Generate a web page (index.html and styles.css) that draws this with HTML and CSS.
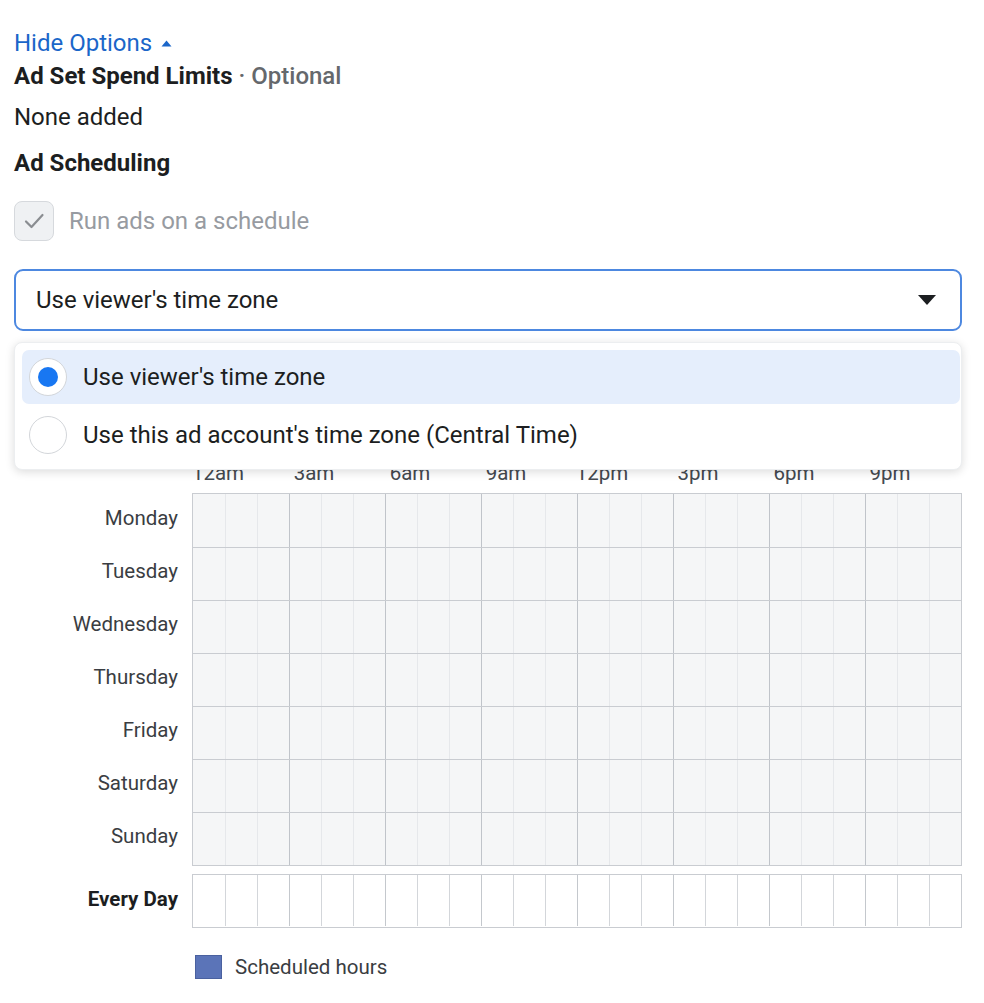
FILE: index.html
```html
<!DOCTYPE html>
<html>
<head>
<meta charset="utf-8">
<link rel="stylesheet" href="styles.css">
<script type="text/javascript">

var days = ['Monday', 'Tuesday', 'Wednesday', 'Thursday', 'Friday', 'Saturday', 'Sunday'];

function fillRow(row) {
    for (var hour = 0; hour < 24; hour++) {
        var cell = document.createElement('div');
        cell.className = 'cell';
        if (hour > 0 && hour % 3 == 0) {
            cell.className += ' group-start';
        }
        row.appendChild(cell);
    }
}

function uiSetup() {
    var names = document.querySelector('div.day-names');
    var grid = document.querySelector('div.week-grid');
    for (var day of days) {
        var label = document.createElement('div');
        label.className = 'day-name';
        label.textContent = day;
        names.appendChild(label);

        var row = document.createElement('div');
        row.className = 'row';
        fillRow(row);
        grid.appendChild(row);
    }
    fillRow(document.querySelector('div.every-day-grid .row'));
}

document.addEventListener('DOMContentLoaded', uiSetup);

</script>
</head>
<body>

<div class="page">

<a class="toggle">Hide Options <svg width="11" height="7" viewBox="0 0 11 7"><path d="M5.5 0.5 L10.5 6.5 L0.5 6.5 Z" fill="#1b66c9"/></svg></a>

<div class="section-title">Ad Set Spend Limits <span class="optional">· Optional</span></div>
<div class="value">None added</div>

<div class="section-title scheduling">Ad Scheduling</div>

<label class="check-row">
    <span class="checkbox"><svg width="24" height="24" viewBox="0 0 24 24"><path d="M4 12.5 L9.5 18 L20.5 6" fill="none" stroke="#8a8d91" stroke-width="2.2" stroke-linecap="round" stroke-linejoin="round"/></svg></span>
    <span class="check-label">Run ads on a schedule</span>
</label>

<div class="picker">
    <div class="select">
        <span>Use viewer's time zone</span>
        <svg width="18" height="10" viewBox="0 0 18 10"><path d="M0 0 L18 0 L9 10 Z" fill="#1c1e21"/></svg>
    </div>
    <div class="menu">
        <div class="option selected"><span class="radio"></span>Use viewer's time zone</div>
        <div class="option"><span class="radio"></span>Use this ad account's time zone (Central Time)</div>
    </div>
</div>

<div class="schedule">
    <div class="hours">
        <span>12am</span><span>3am</span><span>6am</span><span>9am</span>
        <span>12pm</span><span>3pm</span><span>6pm</span><span>9pm</span>
    </div>
    <div class="week">
        <div class="day-names"></div>
        <div class="week-grid"></div>
    </div>
    <div class="week every-day">
        <div class="day-names"><div class="day-name">Every Day</div></div>
        <div class="every-day-grid"><div class="row"></div></div>
    </div>
    <div class="legend">
        <span class="swatch"></span>
        <span>Scheduled hours</span>
    </div>
</div>

</div>

</body>
</html>
```

FILE: styles.css
```css
body {
    margin: 0;
    font-family: Roboto, "Liberation Sans", sans-serif;
    color: #1c1e21;
    background: #fff;
}

.page {
    width: 948px;
    padding: 29px 14px 0 14px;
}

.toggle {
    display: flex;
    align-items: center;
    gap: 9px;
    font-size: 24px;
    line-height: 28px;
    color: #1b66c9;
}

.section-title {
    margin-top: 5px;
    font-size: 24px;
    line-height: 28px;
    font-weight: 700;
}

.section-title .optional {
    color: #65686c;
    font-weight: 500;
}

.section-title.scheduling {
    margin-top: 18px;
}

.value {
    margin-top: 13px;
    font-size: 24px;
    line-height: 28px;
}

.check-row {
    margin-top: 24px;
    display: flex;
    align-items: center;
    gap: 15px;
}

.checkbox {
    width: 38px;
    height: 38px;
    border: 1px solid #d6d9dd;
    border-radius: 8px;
    background: #eff1f3;
    display: flex;
    align-items: center;
    justify-content: center;
}

.check-label {
    font-size: 24px;
    color: #979ba1;
}

.picker {
    position: relative;
    margin-top: 28px;
}

.select {
    height: 58px;
    border: 2px solid #4d88e0;
    border-radius: 9px;
    display: flex;
    align-items: center;
    justify-content: space-between;
    padding: 0 24px 0 20px;
    font-size: 24px;
}

.menu {
    position: absolute;
    left: 0;
    right: 0;
    top: calc(100% + 11px);
    background: #fff;
    border-radius: 8px;
    border: 1px solid #eceef0;
    box-shadow: 0 2px 10px rgba(0, 0, 0, 0.14);
    padding: 7px 1px 7px 7px;
    display: flex;
    flex-direction: column;
    gap: 4px;
    z-index: 2;
}

.option {
    height: 54px;
    border-radius: 7px;
    display: flex;
    align-items: center;
    gap: 16px;
    padding-left: 7px;
    font-size: 24px;
}

.option.selected {
    background: #e5eefc;
}

.radio {
    width: 36px;
    height: 36px;
    border: 1px solid #d3d6da;
    border-radius: 50%;
    background: #fff;
    display: flex;
    align-items: center;
    justify-content: center;
}

.option.selected .radio::after {
    content: "";
    width: 20px;
    height: 20px;
    border-radius: 50%;
    background: #1877f2;
}

.schedule {
    margin-top: 130px;
}

.hours {
    margin-left: 176px;
    display: grid;
    grid-template-columns: repeat(8, 96px);
    height: 24px;
    font-size: 20.5px;
    line-height: 24px;
    color: #444950;
}

.hours span {
    width: 56px;
    text-align: center;
}

.week {
    margin-top: 8px;
    display: flex;
    gap: 14px;
}

.day-names {
    width: 164px;
    padding-top: 1px;
}

.day-name {
    height: 53px;
    box-sizing: border-box;
    padding-bottom: 5px;
    display: flex;
    align-items: center;
    justify-content: flex-end;
    font-size: 20.5px;
    color: #3a3d42;
}

.week-grid,
.every-day-grid {
    width: 768px;
    border: 1px solid #c9ccd1;
}

.row {
    display: flex;
    height: 52px;
    border-top: 1px solid #c9ccd1;
}

.row:first-child {
    border-top: none;
    height: 53px;
}

.cell {
    width: 32px;
    background: #f5f6f7;
    border-left: 1px solid #e6e8eb;
    box-sizing: border-box;
}

.cell:first-child {
    border-left: none;
}

.cell.group-start {
    border-left-color: #c0c4ca;
}

.week.every-day {
    margin-top: 8px;
}

.every-day .day-name {
    font-weight: 700;
    color: #1c1e21;
}

.every-day-grid .row {
    height: 51px;
}

.every-day-grid .cell {
    background: #fff;
    border-left-color: #d3d6da;
}

.every-day-grid .cell.group-start {
    border-left-color: #c4c8cd;
}

.legend {
    margin-top: 27px;
    margin-left: 181px;
    display: flex;
    align-items: center;
    gap: 13px;
    font-size: 20.5px;
    color: #3a3d42;
}

.swatch {
    width: 25px;
    height: 22px;
    background: #5b74b8;
    border: 1px solid #4a619f;
}
```
